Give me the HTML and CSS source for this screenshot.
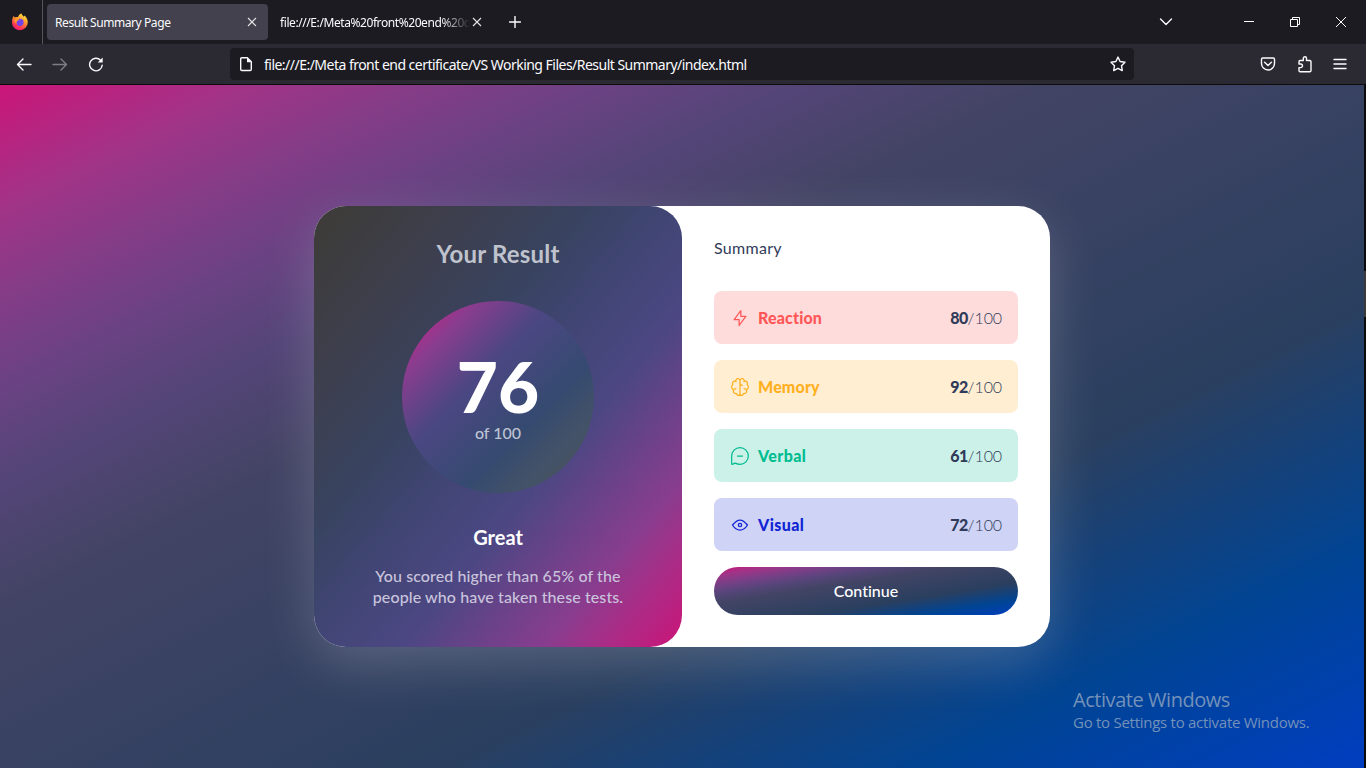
FILE: index.html
```html
<!DOCTYPE html>
<html lang="en">
<head>
<meta charset="utf-8">
<title>Result Summary Page</title>
<link rel="stylesheet" href="styles.css">
</head>
<body>
<div class="window">
  <header class="tabbar">
    <div class="firefox">
      <svg width="18" height="18" viewBox="0 0 18 18">
        <defs>
          <linearGradient id="flame" x1="0.8" y1="0" x2="0.3" y2="1"><stop offset="0" stop-color="#fff14a"/><stop offset=".4" stop-color="#ff9a2a"/><stop offset=".75" stop-color="#ff3f4f"/><stop offset="1" stop-color="#f0157a"/></linearGradient>
        </defs>
        <path fill="url(#flame)" d="M10.300.3c.3 1.500 1.500 2.300 2.600 3.500l.5-1.300c2 1.700 3.400 3.900 3.400 6.700a7.900 7.900 0 0 1-15.800.2c0-2.500.4-4.900 1.700-6.500l1.100 1.600C4.800 4 6.100 3.900 7 4c.7-1.700 1.800-2.900 3.300-3.700z"/>
        <circle cx="9" cy="9.300" r="3.600" fill="#7443e8"/>
        <path fill="#ff9a2a" d="M3.500 6.500c1.500-1.500 3-1.200 4.800-.3-.5 1.300-1.700 1.400-2.600 2.200-.5.500-.2 1.600.3 2.300-1.800-.3-2.900-2.200-2.500-4.200z"/>
      </svg>
    </div>
    <div class="tab tab-active"><span class="tab-title">Result Summary Page</span>
      <svg class="close" width="10" height="10" viewBox="0 0 10 10"><path d="M1 1l8 8M9 1l-8 8"/></svg></div>
    <div class="tab tab-second"><span class="tab-title tab-fade">file:///E:/Meta%20front%20end%20c</span>
      <svg class="close" width="10" height="10" viewBox="0 0 10 10"><path d="M1 1l8 8M9 1l-8 8"/></svg></div>
    <svg class="line-icon new-tab" width="12" height="12" viewBox="0 0 12 12"><path d="M6 .5v11M.5 6h11"/></svg>
    <div class="window-controls">
      <svg class="line-icon" width="14" height="10" viewBox="0 0 14 10"><path d="M1.500 2L7 7.500 12.500 2"/></svg>
      <svg class="sharp-icon minimize" width="10" height="10" viewBox="0 0 10 10"><path d="M0 4.500h10"/></svg>
      <svg class="sharp-icon restore" width="10" height="10" viewBox="0 0 10 10"><path d="M.5 2.500h7v7h-7zM2.500 2.500v-2h7v7h-2"/></svg>
      <svg class="sharp-icon" width="10" height="10" viewBox="0 0 10 10"><path d="M0 0l10 10M10 0L0 10"/></svg>
    </div>
  </header>

  <nav class="toolbar">
    <div class="nav-buttons">
      <svg class="line-icon" width="16" height="16" viewBox="0 0 16 16"><path d="M15 8.500H1.500M7 3L1.500 8.500 7 14"/></svg>
      <svg class="line-icon dim" width="16" height="16" viewBox="0 0 16 16"><path d="M1 8.500h13.500M9 3l5.500 5.500L9 14"/></svg>
      <svg class="line-icon" width="16" height="16" viewBox="0 0 16 16"><path d="M14.200 9.200A6.300 6.300 0 1 1 12.600 4.300"/><path class="solid" d="M14.700 1.500v5h-5z"/></svg>
    </div>
    <div class="urlbar">
      <svg class="line-icon" width="16" height="16" viewBox="0 0 16 16"><path d="M3.700 1.700h5.600l4 4v7.600a1.200 1.200 0 0 1-1.200 1.200H3.900a1.200 1.200 0 0 1-1.200-1.200V2.700a1 1 0 0 1 1-1z"/><path class="solid" d="M9 1.500v4.700h4.700z"/></svg>
      <span class="url">file:///E:/Meta front end certificate/VS Working Files/Result Summary/index.html</span>
      <svg class="line-icon" width="16" height="16" viewBox="0 0 16 16"><path d="M8 1.100l2.100 4.400 4.900.7-3.500 3.500.8 4.900L8 12.300l-4.300 2.300.8-4.900L1 6.200l4.900-.7z"/></svg>
    </div>
    <div class="actions">
      <svg class="line-icon" width="16" height="16" viewBox="0 0 16 16"><path d="M2.700 2h10.600c.7 0 1.200.5 1.200 1.200V7.500a6.500 6.500 0 0 1-13 0V3.200C1.500 2.500 2 2 2.700 2zM4.600 6.300L8 9.500l3.400-3.200"/></svg>
      <svg class="line-icon" width="16" height="18" viewBox="0 0 16 18"><path d="M2 9V6.700c0-.7.400-1.200 1.100-1.200h3.200V3.300a1.600 1.600 0 0 1 3.200 0v2.200h3.300c.7 0 1.200.5 1.200 1.200v8.800c0 .7-.5 1.200-1.200 1.200H3.100c-.7 0-1.100-.5-1.100-1.200v-2.900h1.700a1.800 1.800 0 0 0 0-3.600z"/></svg>
      <svg class="line-icon" width="14" height="12" viewBox="0 0 14 12"><path d="M1 1.500h12M1 6h12M1 10.500h12"/></svg>
    </div>
  </nav>

  <div class="viewport">
    <main class="page">
      <article class="card">
        <section class="result">
          <h1 class="result-title">Your Result</h1>
          <div class="score">
            <span class="score-value">76</span>
            <span class="score-total">of 100</span>
          </div>
          <h2 class="grade">Great</h2>
          <p class="message">You scored higher than 65% of the<br>people who have taken these tests.</p>
        </section>
        <section class="summary">
          <h3 class="summary-title">Summary</h3>
          <ul class="stats">
            <li class="stat reaction">
              <svg class="stat-icon" width="20" height="20" viewBox="0 0 20 20"><path d="M10.833 8.333V2.500l-6.666 9.167h5V17.500l6.666-9.167h-5Z"/></svg>
              <span class="stat-name">Reaction</span><span class="stat-score"><b>80</b>/100</span>
            </li>
            <li class="stat memory">
              <svg class="stat-icon" width="20" height="20" viewBox="0 0 20 20"><path d="M5.833 11.667a2.500 2.500 0 1 0 .834 4.858M3.553 13.004a3.333 3.333 0 0 1-.728-5.530m.025-.067a2.083 2.083 0 0 1 2.983-2.824m.199.054A2.083 2.083 0 1 1 10 3.750v12.917a1.667 1.667 0 0 1-3.333 0M10 5.833a2.500 2.500 0 0 0 2.500 2.500m1.667 3.334a2.500 2.500 0 1 1-.834 4.858M16.447 13.004a3.334 3.334 0 0 0 .728-5.530m-.025-.067a2.083 2.083 0 0 0-2.983-2.824M10 3.750a2.085 2.085 0 0 1 2.538-2.033 2.084 2.084 0 0 1 1.430 2.920m-.635 12.030a1.667 1.667 0 0 1-3.333 0"/></svg>
              <span class="stat-name">Memory</span><span class="stat-score"><b>92</b>/100</span>
            </li>
            <li class="stat verbal">
              <svg class="stat-icon" width="20" height="20" viewBox="0 0 20 20"><path d="M7.500 10h5M10 18.333A8.333 8.333 0 1 0 1.667 10v7.917a.416.416 0 0 0 .416.416C4 18.333 3.300 17.300 5 17.200c1.700.7 3.200 1.133 5 1.133Z"/></svg>
              <span class="stat-name">Verbal</span><span class="stat-score"><b>61</b>/100</span>
            </li>
            <li class="stat visual">
              <svg class="stat-icon" width="20" height="20" viewBox="0 0 20 20"><circle cx="10" cy="10" r="1.670"/><path d="M17.500 10c-1.574 2.492-4.402 5-7.500 5s-5.926-2.508-7.500-5C4.416 7.632 6.660 5 10 5s5.584 2.632 7.500 5Z"/></svg>
              <span class="stat-name">Visual</span><span class="stat-score"><b>72</b>/100</span>
            </li>
          </ul>
          <button class="continue">Continue</button>
        </section>
      </article>
    </main>
    <div class="scroll-edge"><div class="scroll-thumb"></div></div>
  </div>
  <div class="watermark"><p class="wm-title">Activate Windows</p><p class="wm-text">Go to Settings to activate Windows.</p></div>
</div>
</body>
</html>
```
FILE: styles.css
```css
:root {
  --backdrop: linear-gradient(to bottom right, #cb1579, #a23387 9%, #853c87 15.5%, #6b4283 22%, #544578 29%, #434465 38%, #2a3f5f 66%, #004494 84%, #003dc0);
}
* { box-sizing: border-box; }
body, h1, h2, h3, p, ul { margin: 0; padding: 0; }
body { overflow: hidden; background: #111; }
svg { display: block; flex: none; }

.window {
  position: relative;
  width: 1366px;
  height: 768px;
  display: flex;
  flex-direction: column;
  font-family: "Noto Sans", "Open Sans", sans-serif;
  color: #fbfbfe;
}

/* Tab strip */
.tabbar { height: 44px; display: flex; align-items: center; background: #1c1b22; }
.firefox { width: 43px; height: 44px; border-right: 1px solid #56555c; display: flex; align-items: center; padding-left: 11px; }
.tab { height: 36px; display: flex; align-items: center; font-size: 12px; white-space: nowrap; }
.tab-active { width: 221px; margin-left: 4px; padding: 0 11px 0 8px; border-radius: 4px; background: #42414d; justify-content: space-between; }
.tab-second { width: 214px; padding-left: 12px; gap: 2px; }
.tab-title { letter-spacing: -0.42px; padding-top: 1px; }
.tab-fade { width: 190px; overflow: hidden; -webkit-mask-image: linear-gradient(to right, #000 85%, transparent); mask-image: linear-gradient(to right, #000 85%, transparent); }
.close { fill: none; stroke: #e4e4e8; stroke-width: 1.1; }
.line-icon { fill: none; stroke: #fbfbfe; stroke-width: 1.4; stroke-linecap: round; stroke-linejoin: round; }
.line-icon .solid { fill: #fbfbfe; stroke: none; }
.sharp-icon { fill: none; stroke: #fff; stroke-width: 1; }
.new-tab { margin-left: 27px; }
.dim { opacity: .4; }
.window-controls { margin-left: auto; margin-right: 20px; display: flex; align-items: center; }
.minimize { margin-left: 71px; }
.restore { margin: 0 36px; }

/* Navigation toolbar */
.toolbar { height: 41px; display: flex; align-items: center; background: #2b2a33; border-bottom: 1px solid #0c0c0d; padding: 0 19px 0 16px; }
.nav-buttons { display: flex; gap: 20px; width: 214px; }
.urlbar { width: 904px; height: 32px; border-radius: 4px; background: #1c1b22; display: flex; align-items: center; padding: 0 8px; }
.url { margin-left: 10px; flex: 1; font-size: 14px; letter-spacing: -0.52px; white-space: nowrap; }
.actions { margin-left: auto; display: flex; align-items: center; gap: 20.5px; }

/* Page */
.viewport { flex: 1; display: flex; }
.page {
  flex: 1;
  display: flex;
  align-items: center;
  justify-content: center;
  background: var(--backdrop);
}
.scroll-edge { width: 2px; padding-top: 186px; background: #0b0b0d; }
.scroll-thumb { height: 46px; background: #3a3a3a; }

.card {
  width: 736px;
  height: 441px;
  display: flex;
  border-radius: 32px;
  background: #fff;
  box-shadow: 0 16px 52px rgba(255, 255, 255, .19);
  font-family: Lato, "Open Sans", sans-serif;
  font-size: 16px;
  font-variant-ligatures: none;
}
.result {
  width: 368px;
  padding-top: 32px;
  display: flex;
  flex-direction: column;
  align-items: center;
  border-radius: 32px;
  background: linear-gradient(to bottom right, #3d3c3a 4%, #3d3f4f 22%, #384360 37%, #404573 48%, #4c4783 62%, #883d8e 81%, #a92d87 89%, #cb1478);
  text-align: center;
}
.result-title { font-size: 24px; line-height: 31px; font-weight: 700; letter-spacing: .2px; color: #bfc3cd; }
.score {
  width: 192px;
  height: 192px;
  margin-top: 32px;
  border-radius: 50%;
  display: flex;
  flex-direction: column;
  align-items: center;
  background: linear-gradient(to bottom right, #cb1478, #a9308a 12%, #883d8e 20%, #4c4783 39%, #354a70 65%, #435267 80%, #4a5258);
}
.score-value { margin-top: 49px; font-size: 71px; line-height: 72px; font-weight: 900; color: #fff; }
.score-total { line-height: 21px; font-weight: 500; color: #bdc3d3; }
.grade { margin-top: 31px; font-size: 20px; line-height: 26px; font-weight: 700; color: #fff; }
.message { margin-top: 15px; line-height: 21px; font-weight: 500; letter-spacing: .1px; color: #c9c4dc; }

.summary { flex: 1; padding: 31px 32px 32px; color: #303b59; }
.summary-title { font-size: 16px; line-height: 21px; font-weight: 400; letter-spacing: .3px; }
.stats { margin-top: 33px; list-style: none; display: grid; gap: 16px; }
.stat { height: 53px; padding: 0 16px; display: flex; align-items: center; border-radius: 8px; }
.stat-icon { fill: none; stroke: currentColor; stroke-width: 1.25; stroke-linecap: round; stroke-linejoin: round; }
.stat-name { margin-left: 8px; flex: 1; padding-bottom: 1px; font-weight: 900; letter-spacing: .15px; }
.stat-score { padding-bottom: 1px; color: #303b59; font-weight: 300; letter-spacing: -.1px; }
.stat-score b { font-weight: 900; letter-spacing: -.6px; }
.verbal .stat-name, .visual .stat-name { letter-spacing: .4px; }
.reaction { background: #ffdcdc; color: #ff5757; }
.memory { background: #ffeed2; color: #ffb01f; }
.verbal { background: #ccf1e8; color: #00bd91; }
.visual { background: #cfd3f5; color: #1125d4; }
.continue {
  width: 100%;
  height: 48px;
  margin-top: 16px;
  padding: 0 0 2px;
  border: 0;
  border-radius: 24px;
  background: var(--backdrop);
  color: #fff;
  font: 500 16px Lato, sans-serif;
  font-variant-ligatures: none;
}

/* Desktop overlay */
.watermark { position: absolute; left: 1073px; top: 687px; color: #7391b9; white-space: nowrap; font-family: "Open Sans", sans-serif; font-weight: 400; }
.wm-title { font-size: 20px; line-height: 26px; letter-spacing: -.45px; }
.wm-text { font-size: 15px; line-height: 19px; letter-spacing: -.27px; }
```
